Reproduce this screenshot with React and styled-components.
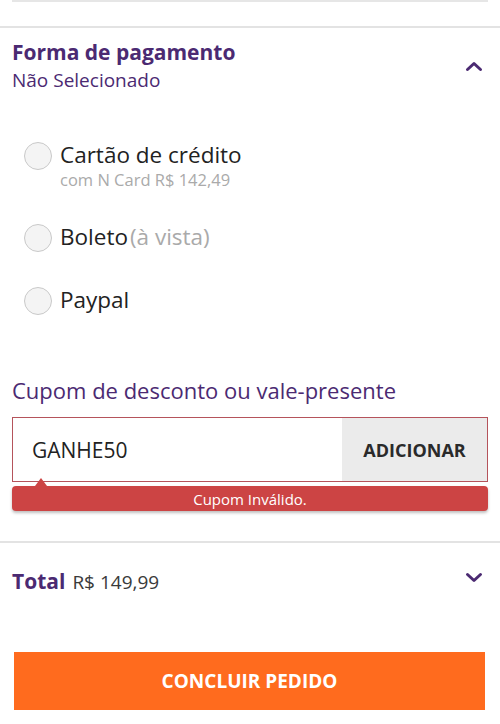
import styled, { createGlobalStyle } from 'styled-components';

const GlobalStyle = createGlobalStyle`
  body {
    margin: 0;
    background: #ffffff;
    font-family: "Open Sans", "Liberation Sans", sans-serif;
  }
`;

const Page = styled.div`
  width: 500px;
  height: 724px;
  overflow: hidden;
  background: #fff;
`;

const TopEdge = styled.div`
  margin: 0 12px;
  height: 2px;
  background: #e6e6e6;
`;

const Section = styled.div`
  border-top: 2px solid #e3e3e3;
  margin-top: 24px;
  padding: 10px 12px 0 12px;
`;

const HeaderRow = styled.div`
  display: flex;
  align-items: center;
  justify-content: space-between;
`;

const Title = styled.div`
  color: #4b2a72;
  font-weight: 700;
  font-size: 21px;
  line-height: 29px;
`;

const Subtitle = styled.div`
  color: #4b2a72;
  font-size: 19px;
  line-height: 26px;
`;

const Chevron = styled.svg`
  width: 18px;
  height: 12px;
  margin-right: 5px;
  margin-top: ${(p) => p.$offset || 0}px;
`;

const Options = styled.div`
  display: flex;
  flex-direction: column;
  gap: 33px;
  padding: 47px 0 0 12px;
`;

const Option = styled.div`
  display: flex;
  align-items: flex-start;
  gap: 8px;
`;

const Radio = styled.span`
  box-sizing: border-box;
  width: 28px;
  height: 28px;
  border-radius: 50%;
  border: 1.5px solid #c9c9c9;
  background: #f4f4f4;
  flex-shrink: 0;
  margin-top: 2px;
`;

const OptionText = styled.div`
  display: flex;
  flex-direction: column;
`;

const OptionLabel = styled.span`
  color: #222;
  font-size: 22.5px;
  line-height: 30px;
`;

const Muted = styled.span`
  color: #aaa;
  font-size: ${(p) => p.$size || 22.5}px;
  line-height: ${(p) => (p.$size ? 19 : 30)}px;
  margin-left: ${(p) => p.$gap || 0}px;
`;

const CouponLabel = styled.div`
  color: #4b2a72;
  font-size: 22px;
  line-height: 28px;
  margin-top: 61px;
`;

const CouponBox = styled.div`
  display: flex;
  box-sizing: border-box;
  height: 65px;
  margin-top: 13px;
  border: 1.5px solid #b5535b;
`;

const CouponInput = styled.div`
  flex: 1;
  display: flex;
  align-items: center;
  padding-left: 19px;
  font-size: 21px;
  color: #222;
`;

const AddButton = styled.div`
  width: 145px;
  display: flex;
  align-items: center;
  justify-content: center;
  background: #ebebeb;
  font-weight: 700;
  font-size: 18px;
  color: #2a2a2a;
`;

const ErrorBar = styled.div`
  position: relative;
  margin-top: 4px;
  height: 25px;
  border-radius: 4px;
  background: #cc4444;
  color: #fff;
  font-size: 15px;
  display: flex;
  align-items: center;
  justify-content: center;
  box-shadow: 0 2px 3px rgba(0, 0, 0, 0.25);

  &::before {
    content: '';
    position: absolute;
    left: 23px;
    top: -8px;
    border-left: 6px solid transparent;
    border-right: 6px solid transparent;
    border-bottom: 8px solid #cc4444;
  }
`;

const TotalSection = styled.div`
  border-top: 2px solid #e3e3e3;
  margin-top: 30px;
  padding: 23px 12px 0 12px;
`;

const TotalText = styled.div`
  display: flex;
  align-items: baseline;
  gap: 7px;
  line-height: 30px;
`;

const TotalLabel = styled.span`
  color: #4b2a72;
  font-weight: 700;
  font-size: 21px;
`;

const TotalValue = styled.span`
  color: #3a3a3a;
  font-size: 19px;
`;

const Submit = styled.div`
  margin: 55px 15px 0 14px;
  height: 58px;
  background: #ff6b1e;
  color: #fff;
  font-weight: 700;
  font-size: 19px;
  display: flex;
  align-items: center;
  justify-content: center;
`;

const ChevronIcon = ({ up, offset }) => (
  <Chevron viewBox="0 0 18 12" $offset={offset}>
    <path
      d={up ? 'M2.5 9.5 L9 3.5 L15.5 9.5' : 'M2.5 2.5 L9 8.5 L15.5 2.5'}
      fill="none"
      stroke="#4b2a72"
      strokeWidth="3"
      strokeLinecap="round"
      strokeLinejoin="round"
    />
  </Chevron>
);

export default function App() {
  return (
    <Page>
      <GlobalStyle />
      <TopEdge />
      <Section>
        <HeaderRow>
          <div>
            <Title>Forma de pagamento</Title>
            <Subtitle>Não Selecionado</Subtitle>
          </div>
          <ChevronIcon up />
        </HeaderRow>

        <Options>
          <Option>
            <Radio />
            <OptionText>
              <OptionLabel>Cartão de crédito</OptionLabel>
              <Muted $size={16.5}>com N Card R$ 142,49</Muted>
            </OptionText>
          </Option>
          <Option>
            <Radio />
            <OptionLabel>
              Boleto<Muted $gap={2}>(à vista)</Muted>
            </OptionLabel>
          </Option>
          <Option>
            <Radio />
            <OptionLabel>Paypal</OptionLabel>
          </Option>
        </Options>

        <CouponLabel>Cupom de desconto ou vale-presente</CouponLabel>
        <CouponBox>
          <CouponInput>GANHE50</CouponInput>
          <AddButton>ADICIONAR</AddButton>
        </CouponBox>
        <ErrorBar>Cupom Inválido.</ErrorBar>
      </Section>

      <TotalSection>
        <HeaderRow>
          <TotalText>
            <TotalLabel>Total</TotalLabel>
            <TotalValue>R$ 149,99</TotalValue>
          </TotalText>
          <ChevronIcon offset={-8} />
        </HeaderRow>
      </TotalSection>

      <Submit>CONCLUIR PEDIDO</Submit>
    </Page>
  );
}
